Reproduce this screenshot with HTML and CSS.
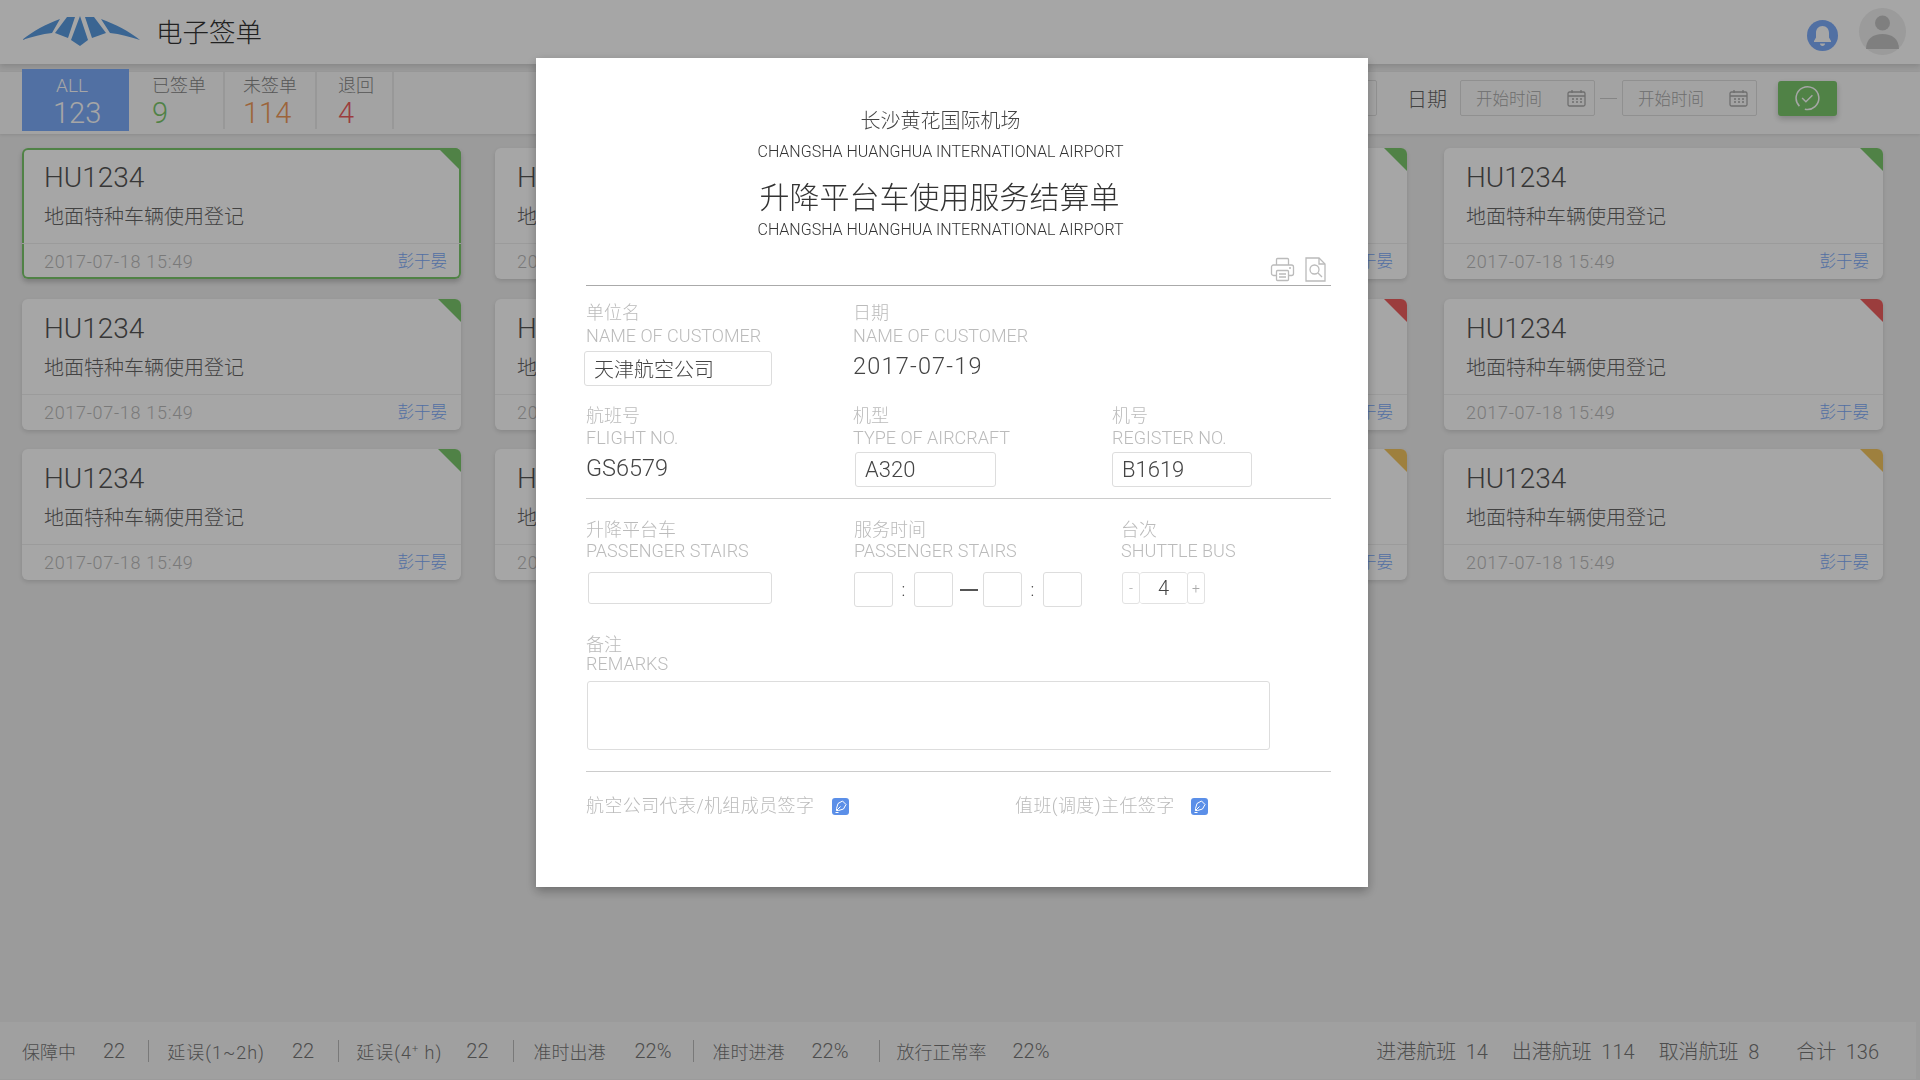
FILE: index.html
```html
<!DOCTYPE html>
<html lang="zh-CN">
<head>
  <meta charset="UTF-8">
  <title>电子签单</title>
  <link rel="stylesheet" href="styles.css">
</head>
<body>
  <div class="page">
    <header class="topbar">
      <svg class="logo" viewBox="0 0 118 30">
        <path d="M0 24C11 15 24 8 38 3L30 17C20 18 10 21 0 24Z"/>
        <path d="M45 1L53 1L46 22L33 17Z"/>
        <path d="M58 0L66 24L58 30L49 24Z"/>
        <path d="M63 1L72 1L84 17L70 22Z"/>
        <path d="M79 3C93 8 107 15 118 24C108 21 98 18 88 17Z"/>
      </svg>
      <div class="topbar-title">电子签单</div>
      <div class="bell">
        <svg viewBox="0 0 31 31" width="31" height="31"><path d="M15.5 6c-4 0-6.500 3-6.500 7v4.500L7 21v1h17v-1l-2-3.500V13c0-4-2.500-7-6.500-7Z"/><path d="M13 23.500h5c0 1.500-1 2.500-2.500 2.500S13 25 13 23.500Z"/></svg>
      </div>
      <div class="avatar">
        <svg viewBox="0 0 47 47" width="47" height="47"><circle cx="23.500" cy="15" r="7.500"/><path d="M7 41c0-10 7-15 16.500-15S40 31 40 41Z"/></svg>
      </div>
    </header>

    <nav class="toolbar">
      <div class="tab tab-all"><span class="tab-name">ALL</span><span class="tab-num">123</span></div>
      <div class="tab tab-signed"><span class="tab-name">已签单</span><span class="tab-num num-green">9</span></div>
      <div class="tab tab-unsigned"><span class="tab-name">未签单</span><span class="tab-num num-orange">114</span></div>
      <div class="tab tab-back"><span class="tab-name">退回</span><span class="tab-num num-red">4</span></div>
      <div class="filter">
        <div class="filter-input"></div>
        <span class="filter-label">日期</span>
        <div class="date-box">开始时间
          <svg viewBox="0 0 19 18" width="19" height="18"><rect x="1" y="3" width="17" height="14" rx="1.500"/><path d="M1 7h17M5 1v3M14 1v3M5 10h2M9 10h2M13 10h2M5 13h2M9 13h2M13 13h2"/></svg>
        </div>
        <span class="filter-dash"></span>
        <div class="date-box">开始时间
          <svg viewBox="0 0 19 18" width="19" height="18"><rect x="1" y="3" width="17" height="14" rx="1.500"/><path d="M1 7h17M5 1v3M14 1v3M5 10h2M9 10h2M13 10h2M5 13h2M9 13h2M13 13h2"/></svg>
        </div>
        <button class="confirm">
          <svg viewBox="0 0 24 24" width="26" height="26"><path d="M5 19.500A10.500 10.500 0 1 1 10 22.300"/><path d="M7.500 12l3.500 3.500 6-6"/></svg>
        </button>
      </div>
    </nav>

    <main class="cards">
      <div class="card card-active tag-green"><div class="card-flight">HU1234</div><div class="card-name">地面特种车辆使用登记</div><div class="card-foot"><span class="card-date">2017-07-18 15:49</span><span class="card-user">彭于晏</span></div></div>
      <div class="card tag-green"><div class="card-flight">HU1234</div><div class="card-name">地面特种车辆使用登记</div><div class="card-foot"><span class="card-date">2017-07-18 15:49</span><span class="card-user">彭于晏</span></div></div>
      <div class="card tag-green"><div class="card-flight">HU1234</div><div class="card-name">地面特种车辆使用登记</div><div class="card-foot"><span class="card-date">2017-07-18 15:49</span><span class="card-user">彭于晏</span></div></div>
      <div class="card tag-green"><div class="card-flight">HU1234</div><div class="card-name">地面特种车辆使用登记</div><div class="card-foot"><span class="card-date">2017-07-18 15:49</span><span class="card-user">彭于晏</span></div></div>
      <div class="card tag-green"><div class="card-flight">HU1234</div><div class="card-name">地面特种车辆使用登记</div><div class="card-foot"><span class="card-date">2017-07-18 15:49</span><span class="card-user">彭于晏</span></div></div>
      <div class="card tag-red"><div class="card-flight">HU1234</div><div class="card-name">地面特种车辆使用登记</div><div class="card-foot"><span class="card-date">2017-07-18 15:49</span><span class="card-user">彭于晏</span></div></div>
      <div class="card tag-red"><div class="card-flight">HU1234</div><div class="card-name">地面特种车辆使用登记</div><div class="card-foot"><span class="card-date">2017-07-18 15:49</span><span class="card-user">彭于晏</span></div></div>
      <div class="card tag-red"><div class="card-flight">HU1234</div><div class="card-name">地面特种车辆使用登记</div><div class="card-foot"><span class="card-date">2017-07-18 15:49</span><span class="card-user">彭于晏</span></div></div>
      <div class="card tag-green"><div class="card-flight">HU1234</div><div class="card-name">地面特种车辆使用登记</div><div class="card-foot"><span class="card-date">2017-07-18 15:49</span><span class="card-user">彭于晏</span></div></div>
      <div class="card tag-yellow"><div class="card-flight">HU1234</div><div class="card-name">地面特种车辆使用登记</div><div class="card-foot"><span class="card-date">2017-07-18 15:49</span><span class="card-user">彭于晏</span></div></div>
      <div class="card tag-yellow"><div class="card-flight">HU1234</div><div class="card-name">地面特种车辆使用登记</div><div class="card-foot"><span class="card-date">2017-07-18 15:49</span><span class="card-user">彭于晏</span></div></div>
      <div class="card tag-yellow"><div class="card-flight">HU1234</div><div class="card-name">地面特种车辆使用登记</div><div class="card-foot"><span class="card-date">2017-07-18 15:49</span><span class="card-user">彭于晏</span></div></div>
    </main>

    <footer class="statusbar">
      <div class="stat"><span>保障中</span><span class="stat-val">22</span></div>
      <div class="stat"><span class="stat-delay">延误(1~2h)</span><span class="stat-val">22</span></div>
      <div class="stat"><span class="stat-delay">延误(4<sup>+</sup> h)</span><span class="stat-val">22</span></div>
      <div class="stat"><span>准时出港</span><span class="stat-val">22%</span></div>
      <div class="stat"><span>准时进港</span><span class="stat-val">22%</span></div>
      <div class="stat"><span>放行正常率</span><span class="stat-val">22%</span></div>
      <div class="totals">
        <span>进港航班<b>14</b></span>
        <span>出港航班<b>114</b></span>
        <span>取消航班<b>8</b></span>
        <span class="totals-sum">合计<b>136</b></span>
      </div>
    </footer>
  </div>

  <div class="overlay"></div>

  <div class="dialog">
    <div class="doc-head">
      <div class="doc-airport">长沙黄花国际机场</div>
      <div class="doc-en">CHANGSHA HUANGHUA INTERNATIONAL AIRPORT</div>
      <h1 class="doc-title">升降平台车使用服务结算单</h1>
      <div class="doc-en doc-en-second">CHANGSHA HUANGHUA INTERNATIONAL AIRPORT</div>
    </div>
    <div class="doc-tools">
      <svg viewBox="0 0 25 25" width="25" height="25"><path d="M6.500 8V2.500a1 1 0 0 1 1-1h10a1 1 0 0 1 1 1V8"/><path d="M6 18.500H3.500a2 2 0 0 1-2-2V10a2 2 0 0 1 2-2h18a2 2 0 0 1 2 2v6.500a2 2 0 0 1-2 2H19"/><rect x="6.500" y="13.500" width="12" height="10" rx="1"/><path d="M9 17h7M9 20h7M19 11h2"/></svg>
      <svg viewBox="0 0 21 25" width="21" height="25"><path d="M1 1h13l6 6v17H1Z"/><path d="M14 1v6h6"/><circle cx="9.500" cy="12.500" r="4.500"/><path d="M13 16l4 4"/></svg>
    </div>

    <div class="form-row row-customer">
      <div>
        <div class="label-cn">单位名</div>
        <div class="label-en">NAME OF CUSTOMER</div>
        <input class="field field-customer" value="天津航空公司">
      </div>
      <div>
        <div class="label-cn">日期</div>
        <div class="label-en">NAME OF CUSTOMER</div>
        <div class="value value-date">2017-07-19</div>
      </div>
    </div>

    <div class="form-row row-flight">
      <div>
        <div class="label-cn">航班号</div>
        <div class="label-en">FLIGHT NO.</div>
        <div class="value">GS6579</div>
      </div>
      <div>
        <div class="label-cn">机型</div>
        <div class="label-en">TYPE OF AIRCRAFT</div>
        <input class="field field-aircraft" value="A320">
      </div>
      <div>
        <div class="label-cn">机号</div>
        <div class="label-en">REGISTER NO.</div>
        <input class="field field-register" value="B1619">
      </div>
    </div>

    <div class="form-row row-service">
      <div>
        <div class="label-cn">升降平台车</div>
        <div class="label-en">PASSENGER STAIRS</div>
        <input class="field field-stairs">
      </div>
      <div>
        <div class="label-cn">服务时间</div>
        <div class="label-en">PASSENGER STAIRS</div>
        <div class="time-range">
          <input class="field field-time"><span class="time-colon">:</span><input class="field field-time">
          <span class="time-dash"></span>
          <input class="field field-time"><span class="time-colon">:</span><input class="field field-time">
        </div>
      </div>
      <div>
        <div class="label-cn">台次</div>
        <div class="label-en">SHUTTLE BUS</div>
        <div class="stepper"><span class="step-btn">-</span><span class="step-val">4</span><span class="step-btn">+</span></div>
      </div>
    </div>

    <div class="remarks">
      <div class="label-cn">备注</div>
      <div class="label-en">REMARKS</div>
      <textarea class="remarks-box"></textarea>
    </div>

    <div class="signs">
      <div class="sign">航空公司代表/机组成员签字
        <svg viewBox="0 0 17 17" width="17" height="17"><rect width="17" height="17" rx="3"/><path class="nib" d="M10.500 3L14 6.500 11.500 11l-5 1.500h-2v-2L6 5.500Z"/><path class="nib" d="M3.500 14.500h3M4.500 12.500l4-4"/></svg>
      </div>
      <div class="sign">值班(调度)主任签字
        <svg viewBox="0 0 17 17" width="17" height="17"><rect width="17" height="17" rx="3"/><path class="nib" d="M10.500 3L14 6.500 11.500 11l-5 1.500h-2v-2L6 5.500Z"/><path class="nib" d="M3.500 14.500h3M4.500 12.500l4-4"/></svg>
      </div>
    </div>
  </div>
</body>
</html>
```

FILE: styles.css
```css
* {
  box-sizing: border-box;
}
body {
  margin: 0;
  background-color: #eee;
  font-family: Roboto, "Noto Sans CJK SC", sans-serif;
  font-weight: 300;
  color: #444;
}
.page {
  display: flex;
  flex-direction: column;
  height: 1080px;
  overflow: hidden;
}

/* top bar */
.topbar {
  display: flex;
  align-items: center;
  height: 64px;
  padding: 0 14px 0 22px;
  background-color: #fff;
  box-shadow: 0 2px 6px rgba(0, 0, 0, 0.15);
}
.logo {
  width: 118px;
  height: 30px;
  margin-top: -2px;
  fill: #5a9be0;
}
.topbar-title {
  margin: -3px 0 0 16px;
  font-size: 26.500px;
  color: #333;
}
.bell {
  width: 31px;
  height: 31px;
  margin: 7px 21px 0 auto;
  border-radius: 50%;
  background-color: #7dacfb;
}
.bell svg {
  display: block;
  fill: #fff;
}
.avatar {
  width: 47px;
  height: 47px;
  margin-top: -2px;
  border-radius: 50%;
  background-color: #eee;
}
.avatar svg {
  display: block;
  fill: #c4c4c4;
}

/* tabs and filter */
.toolbar {
  display: flex;
  align-items: flex-start;
  height: 62px;
  margin-top: 8px;
  background-color: #fbfbfb;
  box-shadow: 0 1px 3px rgba(0, 0, 0, 0.1);
}
.tab {
  display: flex;
  flex-direction: column;
  height: 57px;
  padding-top: 4px;
  border-right: 2px solid #eaeaea;
}
.tab-name {
  font-size: 18px;
  line-height: 20px;
  color: #888;
}
.tab-num {
  margin-top: 2px;
  font-size: 29px;
  line-height: 30px;
}
.tab-all {
  width: 107px;
  height: 62px;
  margin: -3px 0 0 22px;
  padding: 7px 0 0 34px;
  border: 0;
  background-color: #7dacfb;
}
.tab-all .tab-name {
  font-size: 19px;
  color: #fff;
}
.tab-all .tab-num {
  margin-left: -3px;
  color: #fff;
}
.tab-signed {
  width: 96px;
  padding-left: 23px;
}
.tab-unsigned {
  width: 92px;
  padding-left: 18px;
}
.tab-back {
  width: 77px;
  padding-left: 21px;
}
.num-green {
  color: #7bc86c;
}
.num-orange {
  color: #f09a5a;
}
.num-red {
  color: #ef5f5f;
}
.filter {
  display: flex;
  align-items: center;
  margin: 8px 83px 0 auto;
}
.filter-input {
  width: 200px;
  height: 36px;
  margin-right: 30px;
  border: 1px solid #ddd;
  border-radius: 2px;
}
.filter-label {
  margin-right: 13px;
  font-size: 20px;
  color: #666;
}
.date-box {
  display: flex;
  align-items: center;
  justify-content: space-between;
  width: 135px;
  height: 36px;
  padding: 0 8px 0 15px;
  border: 1px solid #ddd;
  border-radius: 2px;
  font-size: 16.500px;
  color: #aaa;
}
.date-box svg {
  fill: none;
  stroke: #aaa;
  stroke-width: 1.300;
}
.filter-dash {
  width: 17px;
  height: 1px;
  margin: 0 5px;
  background-color: #ccc;
}
.confirm {
  display: flex;
  align-items: center;
  justify-content: center;
  width: 59px;
  height: 35px;
  margin-left: 21px;
  padding: 0 2px 0 0;
  border: 0;
  border-radius: 3px;
  background-color: #7bc86c;
  box-shadow: 0 3px 6px rgba(0, 0, 0, 0.2);
}
.confirm svg {
  fill: none;
  stroke: #fff;
  stroke-width: 1.400;
}

/* cards */
.cards {
  flex: 1;
  display: grid;
  grid-template-columns: repeat(4, 439px);
  grid-auto-rows: 131px;
  column-gap: 34px;
  row-gap: 19.500px;
  padding: 14px 0 0 22px;
}
.card {
  position: relative;
  overflow: hidden;
  padding-top: 16px;
  border-radius: 6px;
  background-color: #fff;
  box-shadow: 0 2px 4px rgba(0, 0, 0, 0.12);
}
.card:nth-child(4n) {
  margin: 0 -3px 0 3px;
}
.card::after {
  content: "";
  position: absolute;
  top: 0;
  right: 0;
  border-style: solid;
  border-width: 0 23px 23px 0;
  border-color: transparent;
}
.tag-green::after {
  border-right-color: #7bc86c;
}
.tag-red::after {
  border-right-color: #ef5f5f;
}
.tag-yellow::after {
  border-right-color: #f3c560;
}
.card-active {
  box-shadow: inset 0 0 0 2px #7bc86c, 0 3px 5px rgba(0, 0, 0, 0.2);
}
.card-flight {
  padding-left: 22px;
  font-size: 28px;
  line-height: 28px;
  color: #555;
}
.card-name {
  margin-top: 15px;
  padding-left: 22px;
  font-size: 20px;
  line-height: 20px;
  color: #666;
}
.card-foot {
  display: flex;
  align-items: center;
  justify-content: space-between;
  height: 36px;
  margin-top: 16px;
  padding: 0 14px 0 22px;
  border-top: 1px solid #eee;
}
.card-date {
  font-size: 18px;
  letter-spacing: 0.700px;
  color: #bbb;
}
.card-user {
  margin-top: -3px;
  font-size: 16.500px;
  color: #7dacfb;
}

/* bottom bar */
.statusbar {
  display: flex;
  align-items: center;
  height: 57px;
  margin: 0 4px 1px 0;
  padding-left: 4px;
  background-color: #f6f6f6;
  font-size: 18px;
  color: #777;
}
.stat {
  display: flex;
  align-items: center;
  gap: 27px;
  height: 22px;
  padding: 0 23px 0 18px;
  border-right: 1px solid #bbb;
}
.stat:nth-child(2) {
  padding-right: 24px;
}
.stat:nth-child(3) {
  gap: 24px;
  padding: 0 25px 0 17px;
}
.stat:nth-child(4) {
  gap: 29px;
  padding: 0 22px 0 19px;
}
.stat:nth-child(5) {
  gap: 27px;
  padding-right: 31px;
}
.stat:nth-child(6) {
  gap: 26px;
  padding-left: 16px;
  border-right: 0;
}
.stat-val {
  font-size: 20px;
}
.stat-delay {
  letter-spacing: 1px;
}
.stat sup {
  font-size: 11px;
  line-height: 0;
}
.totals {
  display: flex;
  gap: 24px;
  margin-left: auto;
  padding-right: 37px;
  font-size: 20px;
}
.totals b {
  margin-left: 9.500px;
  font-weight: 300;
}
.totals-sum {
  margin-left: 13px;
}

/* dialog */
.overlay {
  position: fixed;
  top: 0;
  left: 0;
  width: 100%;
  height: 100%;
  background-color: rgba(0, 0, 0, 0.35);
  z-index: 999;
}
.dialog {
  position: fixed;
  top: 58px;
  left: 536px;
  width: 832px;
  height: 829px;
  padding: 53px 37px 0 50px;
  background-color: white;
  box-shadow: 0 4px 10px rgba(0, 0, 0, 0.3);
  z-index: 1000;
}
.doc-head {
  width: 709px;
  text-align: center;
}
.doc-airport {
  font-size: 20px;
  line-height: 20px;
  color: #444;
}
.doc-en {
  margin-top: 11px;
  font-size: 16px;
  line-height: 20px;
  color: #333;
}
.doc-title {
  margin: 21px 2px 0 0;
  font-size: 30px;
  font-weight: 300;
  line-height: 30px;
  color: #333;
}
.doc-en-second {
  margin-top: 7px;
}
.doc-tools {
  display: flex;
  justify-content: flex-end;
  gap: 10px;
  height: 46px;
  padding: 17px 5px 0 0;
  border-bottom: 1px solid #aaa;
}
.doc-tools svg {
  fill: none;
  stroke: #bbb;
  stroke-width: 1.300;
}
.form-row {
  display: grid;
}
.row-customer {
  grid-template-columns: 267px 1fr;
  padding-top: 18px;
}
.row-flight {
  grid-template-columns: 267px 259px 1fr;
  padding: 21px 0 11px;
  border-bottom: 1px solid #ccc;
}
.row-service {
  grid-template-columns: 268px 267px 1fr;
  padding-top: 22px;
}
.label-cn {
  font-size: 18px;
  line-height: 18px;
  color: #bbb;
}
.label-en {
  margin-top: 5px;
  font-size: 18px;
  line-height: 18px;
  color: #bbb;
}
.row-flight .label-en {
  margin-top: 4px;
}
.row-service .label-en {
  margin-top: 3px;
}
.field {
  display: block;
  height: 35px;
  padding: 0 9px;
  border: 1px solid #ddd;
  border-radius: 3px;
  outline: none;
  background: #fff;
  font-family: inherit;
  font-size: 22px;
  font-weight: 300;
  color: #444;
}
.field-customer {
  width: 188px;
  margin: 6px 0 0 -2px;
  font-size: 20px;
}
.field-aircraft {
  width: 141px;
  margin: 5px 0 0 2px;
}
.field-register {
  width: 140px;
  margin-top: 5px;
}
.field-stairs {
  width: 184px;
  height: 32px;
  margin: 12px 0 0 2px;
}
.value {
  margin-top: 9px;
  font-size: 23.500px;
  line-height: 24px;
  color: #444;
}
.value-date {
  letter-spacing: 1.200px;
}
.time-range {
  display: flex;
  align-items: center;
  margin-top: 12px;
}
.field-time {
  width: 39px;
}
.time-colon {
  width: 21px;
  text-align: center;
  font-size: 18px;
}
.time-dash {
  width: 18px;
  height: 2px;
  margin: 0 5px 0 7px;
  background-color: #555;
}
.stepper {
  display: flex;
  margin: 12px 0 0 1px;
  height: 32px;
}
.step-btn {
  display: flex;
  align-items: center;
  justify-content: center;
  width: 18px;
  border: 1px solid #e2e2e2;
  border-radius: 3px;
  font-size: 14px;
  color: #aaa;
}
.step-val {
  display: flex;
  align-items: center;
  justify-content: center;
  width: 47px;
  border: 1px solid #e2e2e2;
  border-width: 1px 0;
  border-radius: 3px;
  font-size: 20px;
}
.remarks {
  padding: 29px 0 21px;
  border-bottom: 1px solid #ccc;
}
.remarks .label-en {
  margin-top: 1px;
}
.remarks-box {
  display: block;
  width: 683px;
  height: 69px;
  margin: 8px 0 0 1px;
  border: 1px solid #ddd;
  border-radius: 3px;
  outline: none;
  resize: none;
}
.signs {
  display: grid;
  grid-template-columns: 429px 1fr;
  padding-top: 25px;
}
.sign {
  display: flex;
  align-items: center;
  gap: 18px;
  font-size: 18px;
  line-height: 18px;
  letter-spacing: 0.400px;
  color: #bbb;
}
.sign + .sign {
  gap: 16px;
}
.sign svg {
  fill: #5b8fe8;
}
.sign .nib {
  fill: none;
  stroke: #fff;
  stroke-width: 1;
}
```
